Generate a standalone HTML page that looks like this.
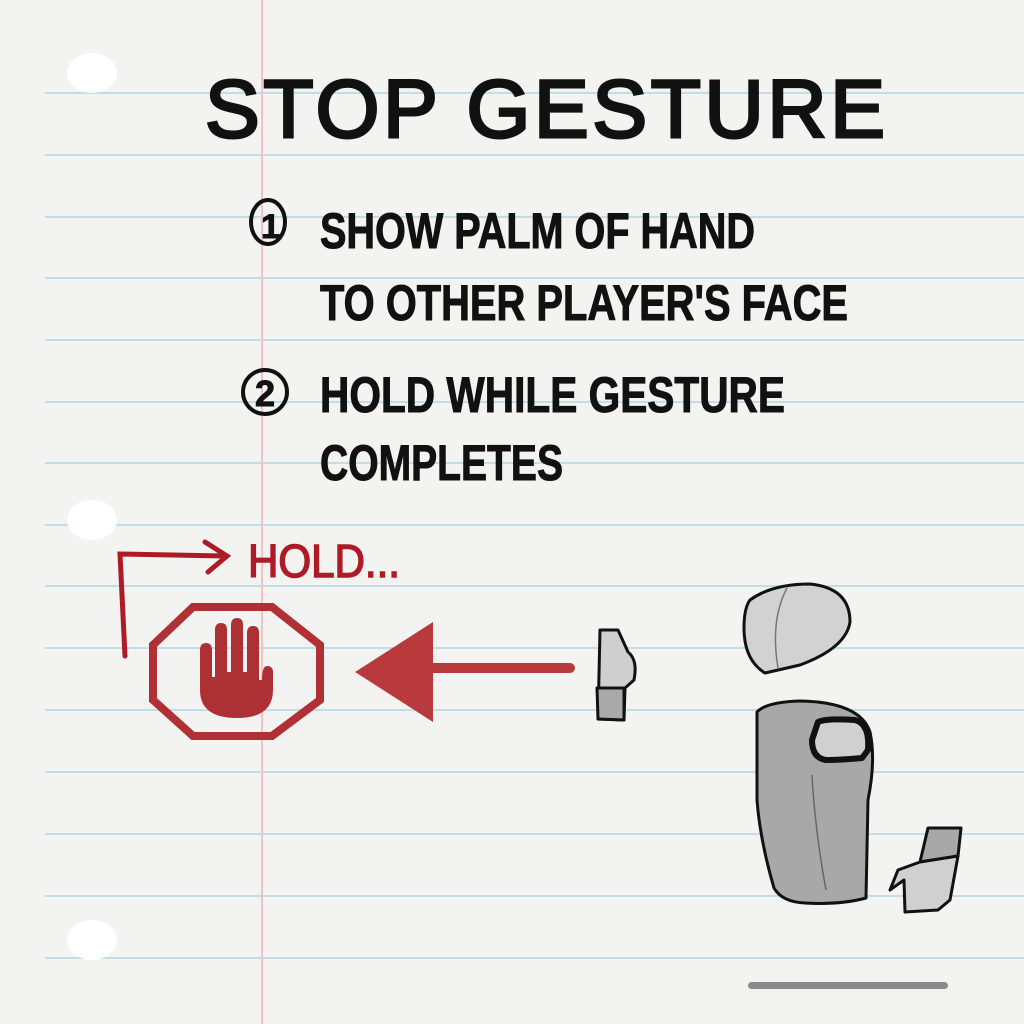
<!DOCTYPE html>
<html><head><style>
html,body{margin:0;padding:0;width:1024px;height:1024px;overflow:hidden;background:#f3f3f3}
svg{display:block}
text{font-family:"Liberation Sans",sans-serif;font-weight:bold}
</style></head><body>
<svg width="1024" height="1024" viewBox="0 0 1024 1024">
<rect width="1024" height="1024" fill="#f3f3f2"/>
<g stroke="#c3dde5" stroke-width="2">
<line x1="45" y1="93" x2="1024" y2="93"/><line x1="45" y1="155" x2="1024" y2="155"/>
<line x1="45" y1="217" x2="1024" y2="217"/><line x1="45" y1="278" x2="1024" y2="278"/>
<line x1="45" y1="340" x2="1024" y2="340"/><line x1="45" y1="402" x2="1024" y2="402"/>
<line x1="45" y1="463" x2="1024" y2="463"/><line x1="45" y1="525" x2="1024" y2="525"/>
<line x1="45" y1="586" x2="1024" y2="586"/><line x1="45" y1="648" x2="1024" y2="648"/>
<line x1="45" y1="710" x2="1024" y2="710"/><line x1="45" y1="772" x2="1024" y2="772"/>
<line x1="45" y1="834" x2="1024" y2="834"/><line x1="45" y1="896" x2="1024" y2="896"/>
<line x1="45" y1="958" x2="1024" y2="958"/>
</g>
<line x1="262" y1="0" x2="262" y2="1024" stroke="#efc4c6" stroke-width="2"/>
<g fill="#fff"><ellipse cx="92" cy="73" rx="25" ry="20"/><ellipse cx="92" cy="520" rx="25" ry="20"/><ellipse cx="92" cy="940" rx="25" ry="20"/></g>
<text x="205" y="137" font-size="82" textLength="680" lengthAdjust="spacing" fill="#111" style="font-weight:normal" stroke="#111" stroke-width="3">STOP  GESTURE</text>
<g fill="#111" font-size="50" style="font-weight:normal" stroke="#111" stroke-width="1">
<ellipse cx="268" cy="222" rx="17" ry="22" fill="none" stroke="#111" stroke-width="4"/><text x="261" y="238" font-size="34">1</text>
<text x="320" y="248" textLength="435" lengthAdjust="spacingAndGlyphs">SHOW PALM OF HAND</text>
<text x="320" y="320" textLength="528" lengthAdjust="spacingAndGlyphs">TO OTHER PLAYER'S FACE</text>
<circle cx="265" cy="392" r="22" fill="none" stroke="#111" stroke-width="4"/><text x="255" y="406" font-size="36">2</text>
<text x="320" y="412" textLength="465" lengthAdjust="spacingAndGlyphs">HOLD WHILE GESTURE</text>
<text x="320" y="480" textLength="243" lengthAdjust="spacingAndGlyphs">COMPLETES</text>
</g>
<text x="248" y="577" font-size="46" fill="#ad1c26" textLength="152" lengthAdjust="spacingAndGlyphs" style="font-weight:normal" stroke="#ad1c26" stroke-width="1.5">HOLD...</text>
<path d="M125 656 L120 554 L225 556 M205 542 L227 556 L208 572" fill="none" stroke="#ad1c26" stroke-width="5" stroke-linecap="round"/>
<polygon points="193,607 272,607 320,645 320,700 272,736 193,736 153,700 153,645" fill="none" stroke="#b03035" stroke-width="8"/>
<path d="M200 650 Q200 643 206 643 Q212 643 212 650 L212 677 L215 677 L215 630 Q215 623 221 623 Q227 623 227 630 L227 672 L231 672 L231 625 Q231 618 237 618 Q243 618 243 625 L243 672 L247 672 L247 633 Q247 626 253 626 Q259 626 259 633 L259 680 L262 680 Q262 666 267 666 Q273 666 273 672 L273 690 Q273 718 237 718 Q200 718 200 690 Z" fill="#ad3035"/>
<path d="M355 672 L433 622 L433 722 Z" fill="#b83a3d"/>
<line x1="430" y1="668" x2="570" y2="668" stroke="#b83a3d" stroke-width="10" stroke-linecap="round"/>
<g stroke="#111" stroke-width="3" stroke-linejoin="round">
<path d="M600 630 L618 630 L628 652 Q638 660 634 680 L625 688 L624 720 L598 719 Z" fill="#cfcfcf"/>
<path d="M597 688 L624 688 L624 720 L598 719 Z" fill="#a9a9a9"/>
<path d="M750 600 Q772 584 810 584 Q850 588 850 622 Q846 648 800 665 L765 673 Q744 660 744 628 Q744 608 750 600 Z" fill="#d2d2d2"/>
<path d="M787 588 Q770 620 778 668" fill="none" stroke="#777" stroke-width="1.5"/>
<path d="M757 712 Q766 702 800 701 Q860 702 870 732 Q876 760 868 800 L866 898 Q840 905 805 903 Q782 902 774 888 Q760 840 757 800 Z" fill="#a8a8a8"/>
<path d="M818 722 Q826 718 855 720 Q870 724 868 750 L862 758 Q840 760 826 760 Q812 758 812 740 Z" fill="#d0d0d0" stroke-width="6"/>
<path d="M812 775 Q815 830 826 890" fill="none" stroke="#666" stroke-width="1.5"/>
<path d="M928 828 L961 828 L958 856 L920 862 Z" fill="#a8a8a8"/>
<path d="M920 862 L958 856 L950 900 L938 910 L905 912 L904 880 L890 890 L898 870 Z" fill="#d0d0d0"/>
</g>
<rect x="748" y="982" width="200" height="7" rx="3.5" fill="#8a8a8a"/>
</svg>
</body></html>
